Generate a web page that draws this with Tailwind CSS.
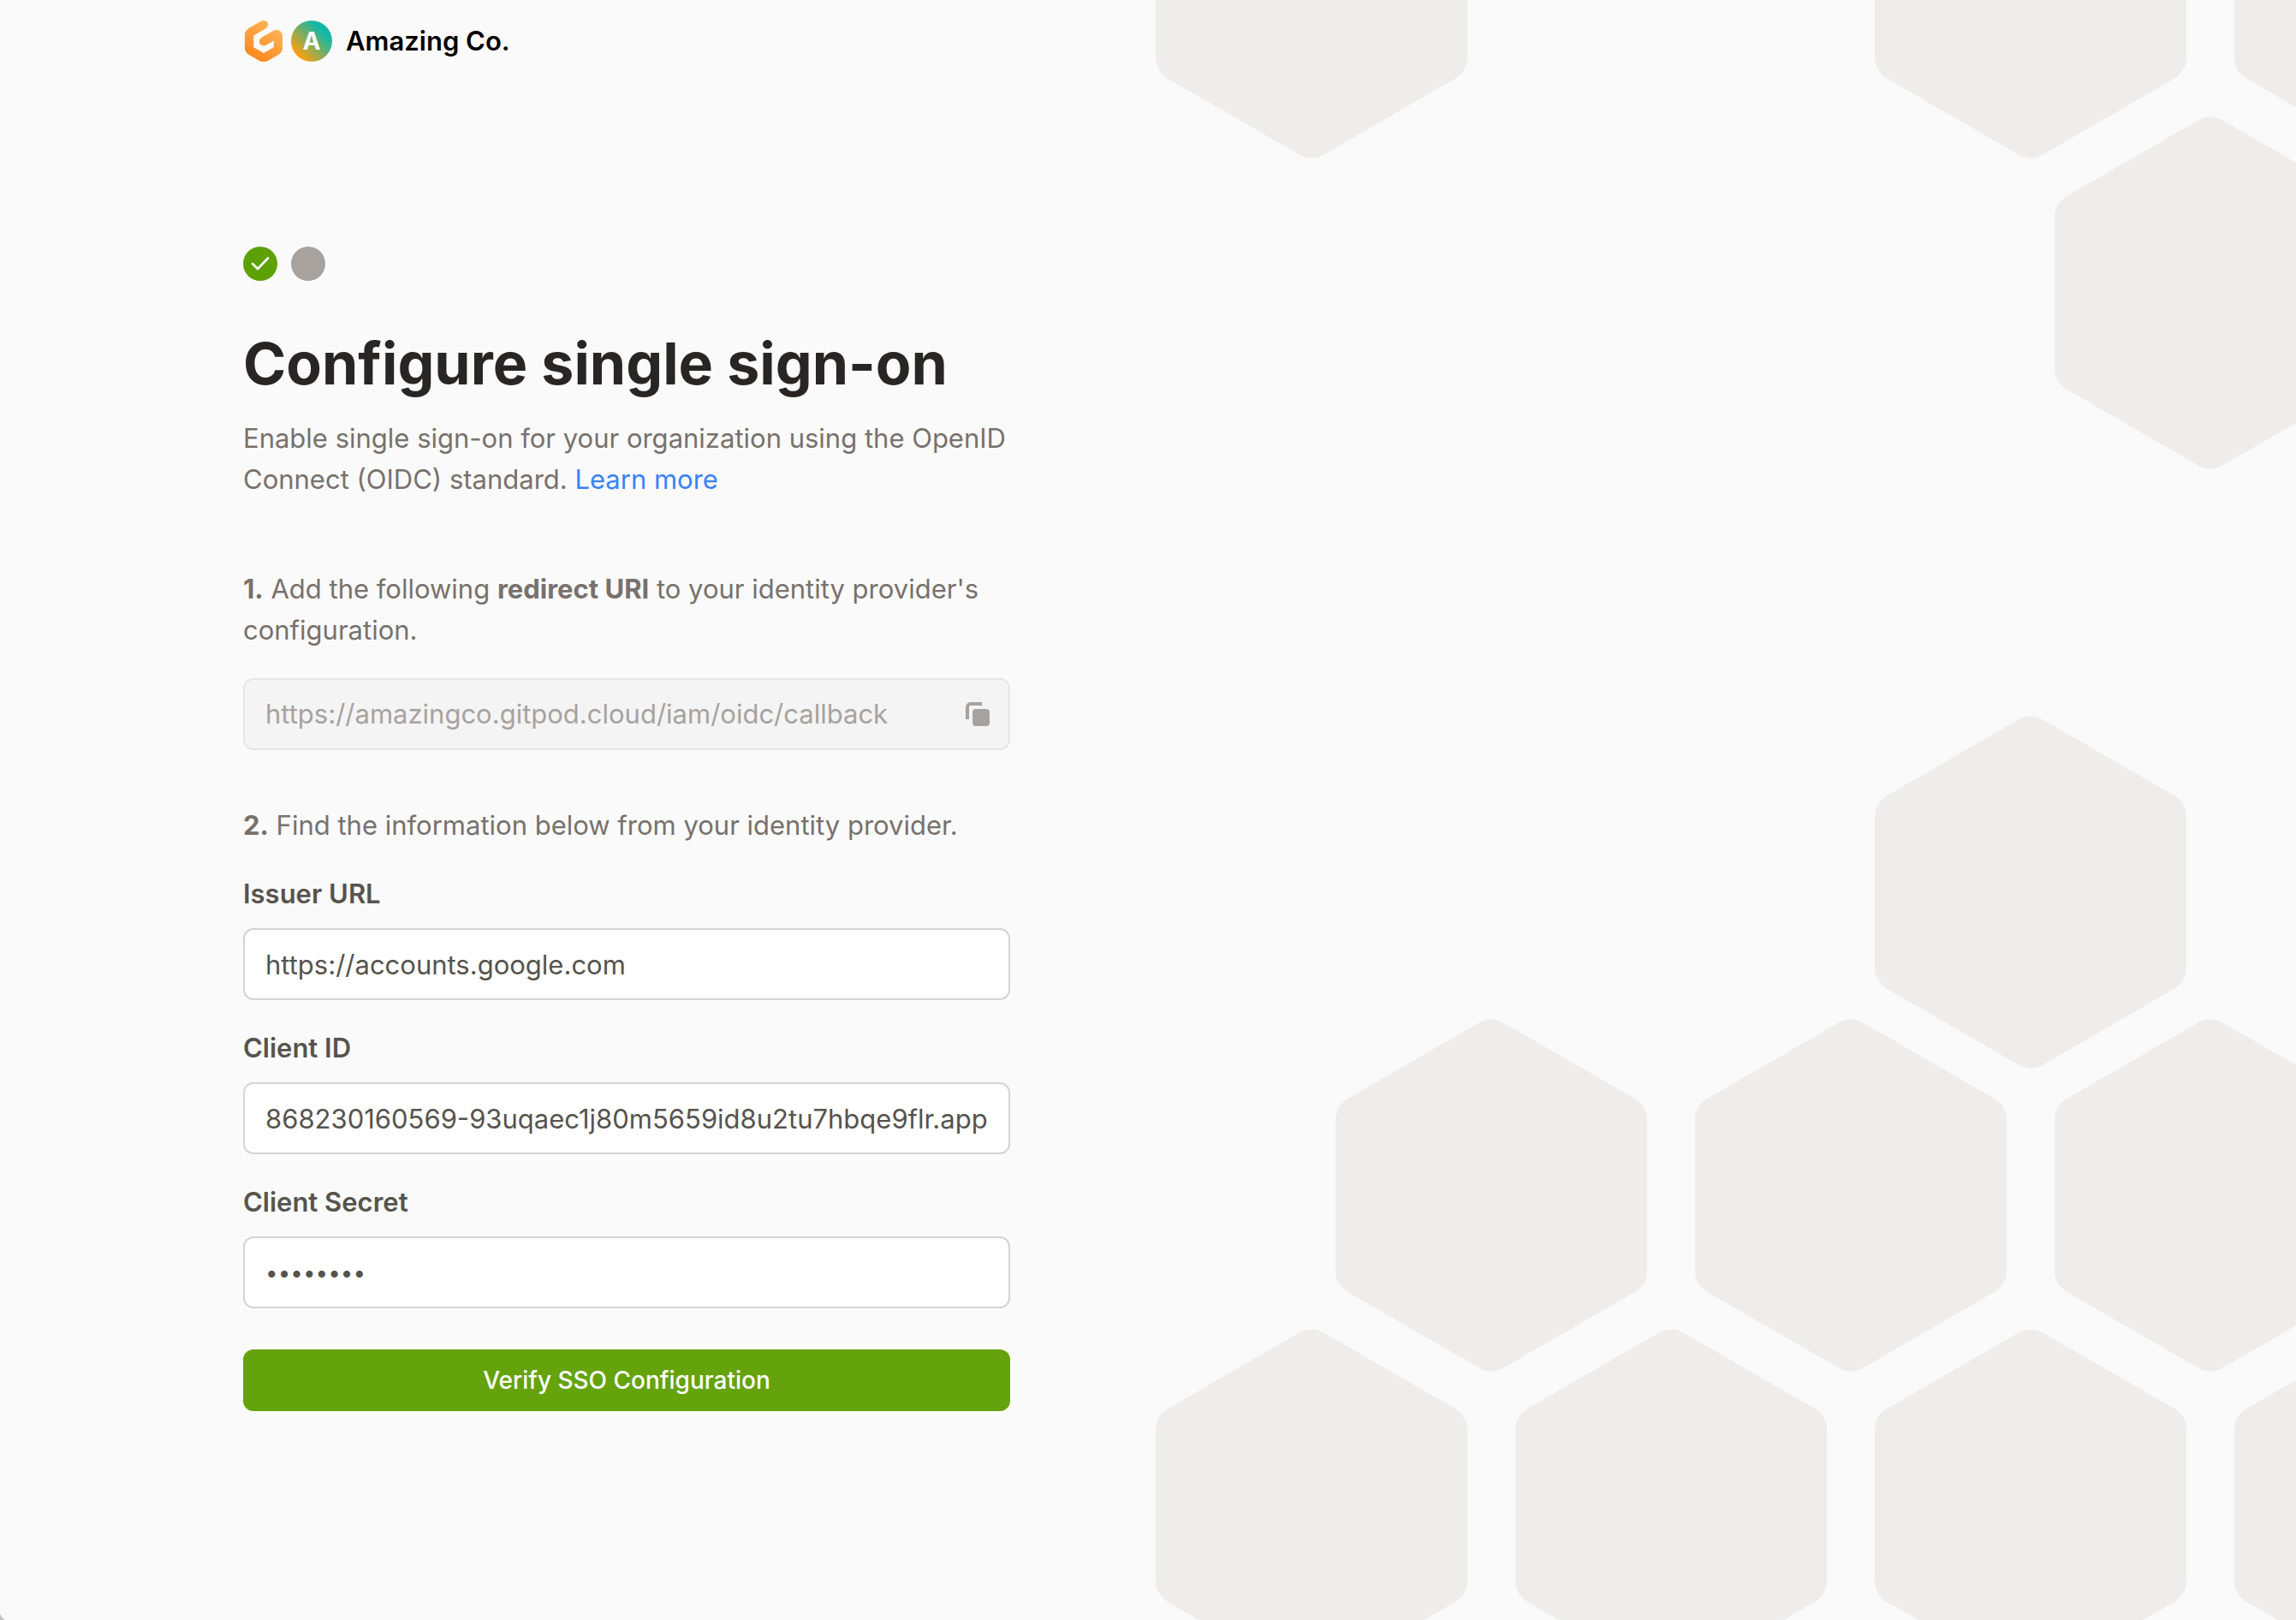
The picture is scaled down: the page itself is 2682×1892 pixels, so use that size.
<!DOCTYPE html>
<html lang="en">
<head>
<meta charset="utf-8">
<meta name="viewport" content="width=device-width, initial-scale=1">
<title>Configure single sign-on</title>
<script src="https://cdn.jsdelivr.net/npm/@tailwindcss/browser@4"></script>
</head>
<body class="relative min-h-screen bg-[#fafafa] font-['Inter',sans-serif] text-[31px] leading-[48px] text-[#78716c]">
<div class="grid min-h-screen grid-cols-2">
  <div class="flex flex-col pl-[284px]">
    <header class="flex items-center gap-2 py-6">
      <svg class="size-12" viewBox="0 0 24 24" role="img" aria-label="Gitpod">
        <defs>
          <linearGradient id="logo" x1="0.75" y1="0.1" x2="0.3" y2="0.9">
            <stop offset="0" stop-color="#ffb45b"/>
            <stop offset="1" stop-color="#ff8a1f"/>
          </linearGradient>
        </defs>
        <path fill="url(#logo)" stroke="url(#logo)" stroke-width="0.5" d="M14.033 1.195a2.387 2.387 0 0 1-.87 3.235l-6.98 4.04a.602.602 0 0 0-.3.522v6.342a.6.6 0 0 0 .3.521l5.524 3.199a.585.585 0 0 0 .586 0l5.527-3.199a.603.603 0 0 0 .299-.52V11.39l-4.969 2.838a2.326 2.326 0 0 1-3.19-.9 2.388 2.388 0 0 1 .89-3.23l7.108-4.062C20.123 4.8 22.8 6.384 22.8 8.901v6.914a4.524 4.524 0 0 1-2.245 3.919l-6.345 3.672a4.407 4.407 0 0 1-4.422 0l-6.345-3.672A4.524 4.524 0 0 1 1.2 15.815V8.511a4.524 4.524 0 0 1 2.245-3.918l7.393-4.279a2.326 2.326 0 0 1 3.195.88z"/>
      </svg>
      <span class="flex size-12 items-center justify-center rounded-full bg-[linear-gradient(45deg,#ff9f0a_15%,#14b8a6_75%)] text-[28px] font-bold text-white">A</span>
      <span class="pl-2 font-semibold text-black">Amazing Co.</span>
    </header>

    <main class="flex w-full max-w-[896px] flex-col pt-48">
      <div class="flex gap-4">
        <span class="flex size-10 items-center justify-center rounded-full bg-[#5ea107]">
          <svg class="size-10" viewBox="0 0 40 40" fill="none" stroke="#fff" stroke-width="2.6" stroke-linecap="round" stroke-linejoin="round" aria-label="Done"><path d="M11 20l6 6 12-12.500"/></svg>
        </span>
        <span class="size-10 rounded-full bg-[#a8a29e]"></span>
      </div>

      <h1 class="mt-14 text-[68px] leading-20 font-bold whitespace-nowrap text-[#292524]">Configure single sign-on</h1>
      <p class="mt-6">Enable single sign-on for your organization using the OpenID Connect (OIDC) standard. <a href="#" class="text-[#3b82f6]">Learn more</a></p>

      <form class="mt-20 flex flex-col">
        <label for="redirect"><b class="font-bold">1.</b> Add the following <b class="font-bold">redirect URI</b> to your identity provider's configuration.</label>
        <div class="mt-8 flex h-[84px] items-center rounded-xl border-2 border-[#e5e5e5] bg-[#f4f4f4] pr-[22px] pl-6">
          <input id="redirect" type="text" readonly value="https://amazingco.gitpod.cloud/iam/oidc/callback" class="min-w-0 flex-1 bg-transparent text-[#a8a29e] outline-none">
          <button type="button" aria-label="Copy" class="text-[#a8a29e]">
            <svg class="size-7" viewBox="0 0 28 28"><rect x="8" y="8" width="20" height="20" rx="4" fill="currentColor"/><path d="M2 20V6a4 4 0 0 1 4-4h13" fill="none" stroke="currentColor" stroke-width="4"/></svg>
          </button>
        </div>

        <p class="mt-16"><b class="font-bold">2.</b> Find the information below from your identity provider.</p>

        <label for="issuer" class="mt-8 font-semibold text-[#57534e]">Issuer URL</label>
        <input id="issuer" type="text" value="https://accounts.google.com" class="mt-4 h-[84px] rounded-xl border-2 border-[#d4d4d4] bg-white px-6 text-[#57534e]">

        <label for="client" class="mt-8 font-semibold text-[#57534e]">Client ID</label>
        <input id="client" type="text" value="868230160569-93uqaec1j80m5659id8u2tu7hbqe9flr.apps.googleusercontent.com" class="mt-4 h-[84px] rounded-xl border-2 border-[#d4d4d4] bg-white px-6 text-[#57534e]">

        <label for="secret" class="mt-8 font-semibold text-[#57534e]">Client Secret</label>
        <input id="secret" type="password" value="password" class="mt-4 h-[84px] rounded-xl border-2 border-[#d4d4d4] bg-white px-6 text-[26px] text-[#57534e]">

        <button type="submit" class="mt-12 h-18 rounded-xl bg-[#65a30d] text-[28px] font-medium text-white">Verify SSO Configuration</button>
      </form>
    </main>
  </div>

  <div class="relative overflow-hidden" aria-hidden="true">
    <svg class="absolute inset-0 size-full" viewBox="1341 0 1341 1892" preserveAspectRatio="xMinYMid slice" fill="#eeedeb">
      <defs>
        <path id="hex" d="M-14-201.700A27.700 27.700 0 0 1 14-201.700L168-112.700A27.700 27.700 0 0 1 182-88.700V88.700A27.700 27.700 0 0 1 168 112.700L14 201.700A27.700 27.700 0 0 1-14 201.700L-168 112.700A27.700 27.700 0 0 1-182 88.700V-88.700A27.700 27.700 0 0 1-168-112.700Z"/>
      </defs>
      <use href="#hex" x="1532" y="-21"/>
      <use href="#hex" x="2372" y="-21"/>
      <use href="#hex" x="2792" y="-21"/>
      <use href="#hex" x="2582" y="342"/>
      <use href="#hex" x="2372" y="1042"/>
      <use href="#hex" x="1742" y="1396"/>
      <use href="#hex" x="2162" y="1396"/>
      <use href="#hex" x="2582" y="1396"/>
      <use href="#hex" x="1532" y="1758"/>
      <use href="#hex" x="1952" y="1758"/>
      <use href="#hex" x="2372" y="1758"/>
      <use href="#hex" x="2792" y="1758"/>
    </svg>
  </div>
</div>
<svg class="absolute bottom-0 left-0 size-2" viewBox="0 0 8 8" aria-hidden="true"><path d="M0 1Q2 5 6 8H0Z" fill="#c4c4c4"/></svg>
</body>
</html>
